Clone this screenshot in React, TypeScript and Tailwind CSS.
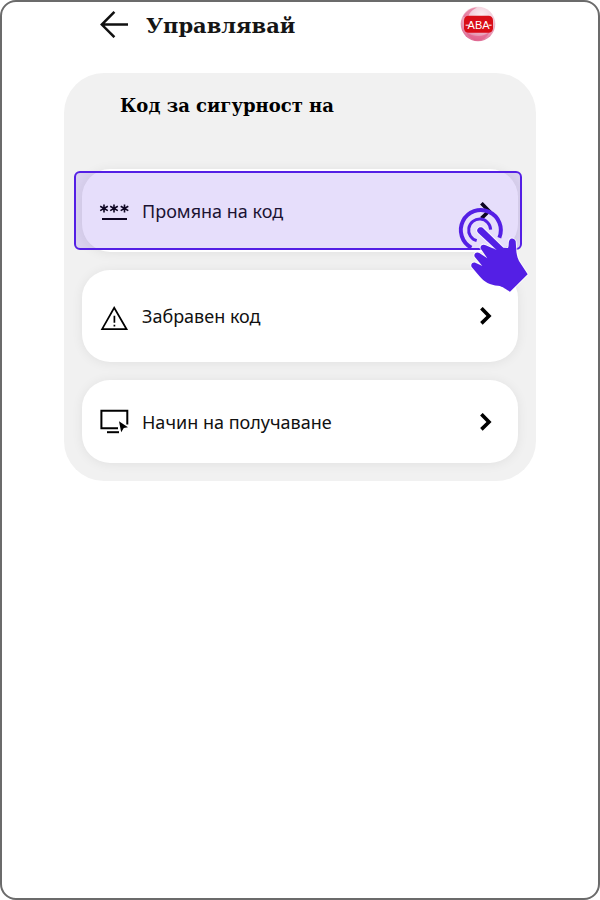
import type { ReactNode } from "react";

function BackIcon() {
  return (
    <svg viewBox="0 0 28 28" className="h-7 w-7" fill="none" stroke="#111" strokeWidth="2.5">
      <path d="M14.4 1.8 1.8 14.6 14.4 27.2M1.8 14.6H28" />
    </svg>
  );
}

function CodeIcon() {
  const star = "M0-4V4M-3.8-2.2 3.8 2.2M3.8-2.2-3.8 2.2";
  return (
    <svg viewBox="0 0 28 28" className="h-7 w-7 overflow-visible" fill="none" stroke="#000" strokeWidth="1.6">
      <path transform="translate(4 11.4)" d={star} />
      <path transform="translate(14 11.4)" d={star} />
      <path transform="translate(24.5 11.4)" d={star} />
      <path d="M2 22H27" strokeWidth="2" />
    </svg>
  );
}

function WarningIcon() {
  return (
    <svg viewBox="0 0 28 28" className="h-7 w-7 overflow-visible" fill="none" stroke="#000" strokeWidth="1.7">
      <path d="M14.2 5.8 26.6 27.2H2.1Z" />
      <path d="M14.4 13.8V20.8M14.4 22.8V24.6" />
    </svg>
  );
}

function ScreenIcon() {
  return (
    <svg viewBox="0 0 28 28" className="h-7 w-7 overflow-visible" fill="none" stroke="#000" strokeWidth="2">
      <path d="M18 20.2H1.4V2.8H27.3V16.5" />
      <path d="M7 24.2H19" />
      <path d="M19 13.3 28 19.2 23.8 20.1 21.2 24.2Z" fill="#000" stroke="none" />
    </svg>
  );
}

function Chevron() {
  return (
    <svg viewBox="0 0 12 18" className="h-[18px] w-3" fill="none" stroke="#000" strokeWidth="3.6">
      <path d="M1.4 1.2 9 9 1.4 16.4" />
    </svg>
  );
}

function Avatar() {
  return (
    <svg viewBox="0 0 36 36" className="h-9 w-9" role="img" aria-label="ABA">
      <defs>
        <radialGradient id="ball" cx="0.6" cy="0.25" r="0.8">
          <stop offset="0" stopColor="#fbeef2" />
          <stop offset="0.5" stopColor="#f0c6d5" />
          <stop offset="1" stopColor="#dd6590" />
        </radialGradient>
      </defs>
      <circle cx="18" cy="18" r="17.3" fill="url(#ball)" />
      <path
        d="M3 11C6 5 11 2 17 1.6 12 4 9 7 8 12ZM6 26C13 31 24 32 30 25 27 33 20 36 14 34 10 32 8 30 6 26Z"
        fill="#e2517f"
        opacity="0.55"
      />
      <rect x="4" y="9.8" width="29" height="17" rx="4.5" fill="#d90d18" />
      <path d="M5.6 19.2H9M28.6 19.2H31.6" stroke="#fff" strokeWidth="1" />
      <text
        x="18.6"
        y="22.8"
        textAnchor="middle"
        fontFamily="Liberation Sans, sans-serif"
        fontSize="11"
        fill="#fff"
      >
        ABA
      </text>
    </svg>
  );
}

function TapHand() {
  return (
    <svg viewBox="78 135 225 270" className="h-[90px] w-[75px]" fill="none" aria-hidden="true">
      <g stroke="#541fe5" strokeLinecap="butt">
        <path d="M127 263A60 60 0 1 1 211 233" strokeWidth="12" />
        <path d="M143 242A33 33 0 1 1 185 209" strokeWidth="9" />
      </g>
      <path
        d="M146 207C149 201 158 200 164 206L223 263 237 264C241 257 237 247 242 239 247 233 257 236 260 244 262 263 260 284 270 303L296 343 243 395C231 388 222 379 207 377 184 376 165 366 151 348L128 321C124 314 130 306 139 308L160 318 137 290C133 281 143 274 151 279L175 295 156 267C151 259 161 250 170 256L203 270 148 219C144 215 143 211 146 207Z"
        fill="#541fe5"
        stroke="#fff"
        strokeOpacity="0.75"
        strokeWidth="6"
        strokeLinejoin="round"
        paintOrder="stroke"
      />
    </svg>
  );
}

type RowProps = {
  icon: ReactNode;
  label: string;
  tall?: boolean;
};

function MenuRow({ icon, label, tall }: RowProps) {
  return (
    <button
      type="button"
      className={`flex w-full items-center rounded-[28px] bg-white pr-[26px] pl-[18px] text-left shadow-[0_1px_12px_rgba(0,0,0,0.07)] ${
        tall ? "h-[92px]" : "h-[83px]"
      }`}
    >
      {icon}
      <span className="ml-[14px] flex-1 text-[18px] leading-6 text-[#111]">{label}</span>
      <Chevron />
    </button>
  );
}

export default function App() {
  return (
    <div
      lang="bg"
      className="min-h-screen rounded-2xl border-2 border-[#6b6b6b] bg-white px-[62px] font-['Noto_Sans',sans-serif]"
    >
      <header className="flex h-[71px] items-start pt-1 pr-10 pl-9">
        <button type="button" aria-label="Назад" className="mt-1">
          <BackIcon />
        </button>
        <h1 className="ml-[18px] flex-1 font-['DejaVu_Serif',serif] text-[21px] leading-10 font-bold text-[#151515]">
          Управлявай
        </h1>
        <Avatar />
      </header>

      <main className="rounded-[40px] bg-[#f1f1f1] px-[18px] pt-5 pb-[18px]">
        <h2 className="mb-[50px] pl-[38px] font-['DejaVu_Serif',serif] text-[18px] leading-[26px] font-bold text-black">
          Код за сигурност на
        </h2>
        <div className="flex flex-col gap-[18px]">
          <div className="relative">
            <MenuRow icon={<CodeIcon />} label="Промяна на код" />
            <div className="pointer-events-none absolute top-0.5 -right-1 bottom-0.5 -left-2 rounded-md border-2 border-[#541fe5] bg-[#541fe5]/15" />
            <div className="pointer-events-none absolute top-9 -right-3">
              <TapHand />
            </div>
          </div>
          <MenuRow icon={<WarningIcon />} label="Забравен код" tall />
          <MenuRow icon={<ScreenIcon />} label="Начин на получаване" />
        </div>
      </main>
    </div>
  );
}
